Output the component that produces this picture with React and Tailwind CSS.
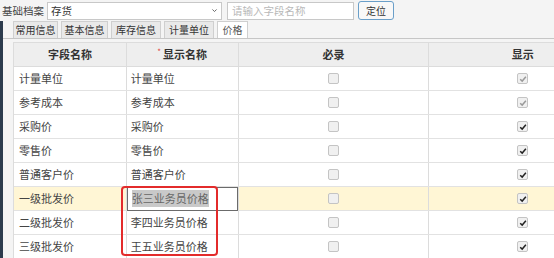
import React from 'react';

const rows = [
  { name: '计量单位', label: '计量单位', lock: true },
  { name: '参考成本', label: '参考成本', lock: true },
  { name: '采购价', label: '采购价' },
  { name: '零售价', label: '零售价' },
  { name: '普通客户价', label: '普通客户价' },
  { name: '一级批发价', label: '张三业务员价格', editing: true },
  { name: '二级批发价', label: '李四业务员价格' },
  { name: '三级批发价', label: '王五业务员价格' },
];

const tabs = [
  { t: '常用信息', w: 'w-[45px]' },
  { t: '基本信息', w: 'w-[47px]' },
  { t: '库存信息', w: 'w-[50px]' },
  { t: '计量单位', w: 'w-[50px]' },
  { t: '价格', w: 'w-[31px]', active: true },
];

function Box({ checked, lock }) {
  return (
    <span className="inline-flex w-[11px] h-[11px] items-center justify-center rounded-[2px] border border-[#c4c4c4] bg-[#f0f0f0]">
      {checked && (
        <svg viewBox="0 0 10 10" className="w-[8px] h-[8px]">
          <path d="M1.5 5.2 L4 7.6 L8.6 2.2" fill="none" stroke={lock ? '#9a9a9a' : '#222'} strokeWidth="1.8" />
        </svg>
      )}
    </span>
  );
}

export default function App() {
  return (
    <div className="relative w-[554px] h-[258px] overflow-hidden bg-[#f4f4f4] text-[11px] text-[#333]" style={{ fontFamily: '"Noto Sans CJK SC", "Noto Sans", sans-serif' }}>
      <div className="flex items-center h-[21px] pl-[2px]">
        <span className="text-[10.5px] text-[#444] w-[45px]">基础档案</span>
        <div className="flex items-center justify-between w-[175px] h-[18px] border border-[#c8c8c8] bg-white px-[3px] text-[10.5px]">
          <span>存货</span>
          <svg viewBox="0 0 10 10" className="w-[7px] h-[7px]"><path d="M2 3.5 L5 6.5 L8 3.5" fill="none" stroke="#666" strokeWidth="1.4" /></svg>
        </div>
        <div className="ml-[5px] w-[127px] h-[18px] border border-[#c8c8c8] bg-white px-[4px] text-[10.5px] text-[#b8b8b8] leading-[16px]">请输入字段名称</div>
        <div className="ml-[4px] w-[36px] h-[19px] rounded-[3px] border border-[#6a9fc9] bg-[#f8f8f8] text-[10px] text-[#333] flex items-center justify-center">定位</div>
      </div>

      <div className="flex h-[237px]">
        <div className="w-[3px] bg-[#2c3b4d] shrink-0" />
        <div className="flex-1 flex flex-col">
          <div className="flex items-end gap-[3px] pl-[10px] h-[18px] border-b border-[#c6c6c6]">
            {tabs.map((tab) => (
              <div key={tab.t} className={`${tab.w} h-[17px] text-center text-[10px] leading-[16px] border border-b-0 border-[#cfcfcf] ${tab.active ? 'bg-white text-[#555]' : 'bg-[#e9e9e9] text-[#333]'}`}>{tab.t}</div>
            ))}
          </div>
          <div className="pl-[10px] pt-[3px]">
            <div className="w-[603px] border-l border-t border-[#dcdcdc] bg-white">
              <div className="flex h-[24px] bg-[#eeeeee] font-bold text-[11px] text-[#333] border-b border-[#dcdcdc]">
                <div className="w-[113px] flex items-center justify-center border-r border-[#dcdcdc]">字段名称</div>
                <div className="w-[112px] flex items-center justify-center border-r border-[#dcdcdc]"><span className="text-[#e0463c] text-[8px] font-normal mr-[2px] -mt-[6px]">*</span>显示名称</div>
                <div className="w-[191px] flex items-center justify-center border-r border-[#dcdcdc]">必录</div>
                <div className="w-[187px] flex items-center justify-center">显示</div>
              </div>
              {rows.map((r) => (
                <div key={r.name} className={`flex h-[24px] border-b border-[#e2e2e2] ${r.editing ? 'bg-[#fff6d5]' : ''}`}>
                  <div className="w-[113px] flex items-center pl-[5px] border-r border-[#dcdcdc] text-[#444]">{r.name}</div>
                  <div className="w-[112px] flex items-center border-r border-[#dcdcdc] text-[#444]">
                    {r.editing ? (
                      <div className="w-full h-[24px] border border-[#6b6b6b] bg-white flex items-center pl-[4px]">
                        <span className="bg-[#c9c9c9] text-[#666]">{r.label}</span>
                      </div>
                    ) : (
                      <span className="pl-[4px]">{r.label}</span>
                    )}
                  </div>
                  <div className="w-[191px] flex items-center justify-center border-r border-[#dcdcdc]">
                    <Box lock={r.lock} />
                  </div>
                  <div className="w-[187px] flex items-center justify-center">
                    <Box checked lock={r.lock} />
                  </div>
                </div>
              ))}
            </div>
          </div>
        </div>
      </div>

      <div className="absolute left-[121px] top-[186px] w-[97px] h-[70px] border-2 border-[#e32b2b] rounded-[4px] pointer-events-none" />
    </div>
  );
}
